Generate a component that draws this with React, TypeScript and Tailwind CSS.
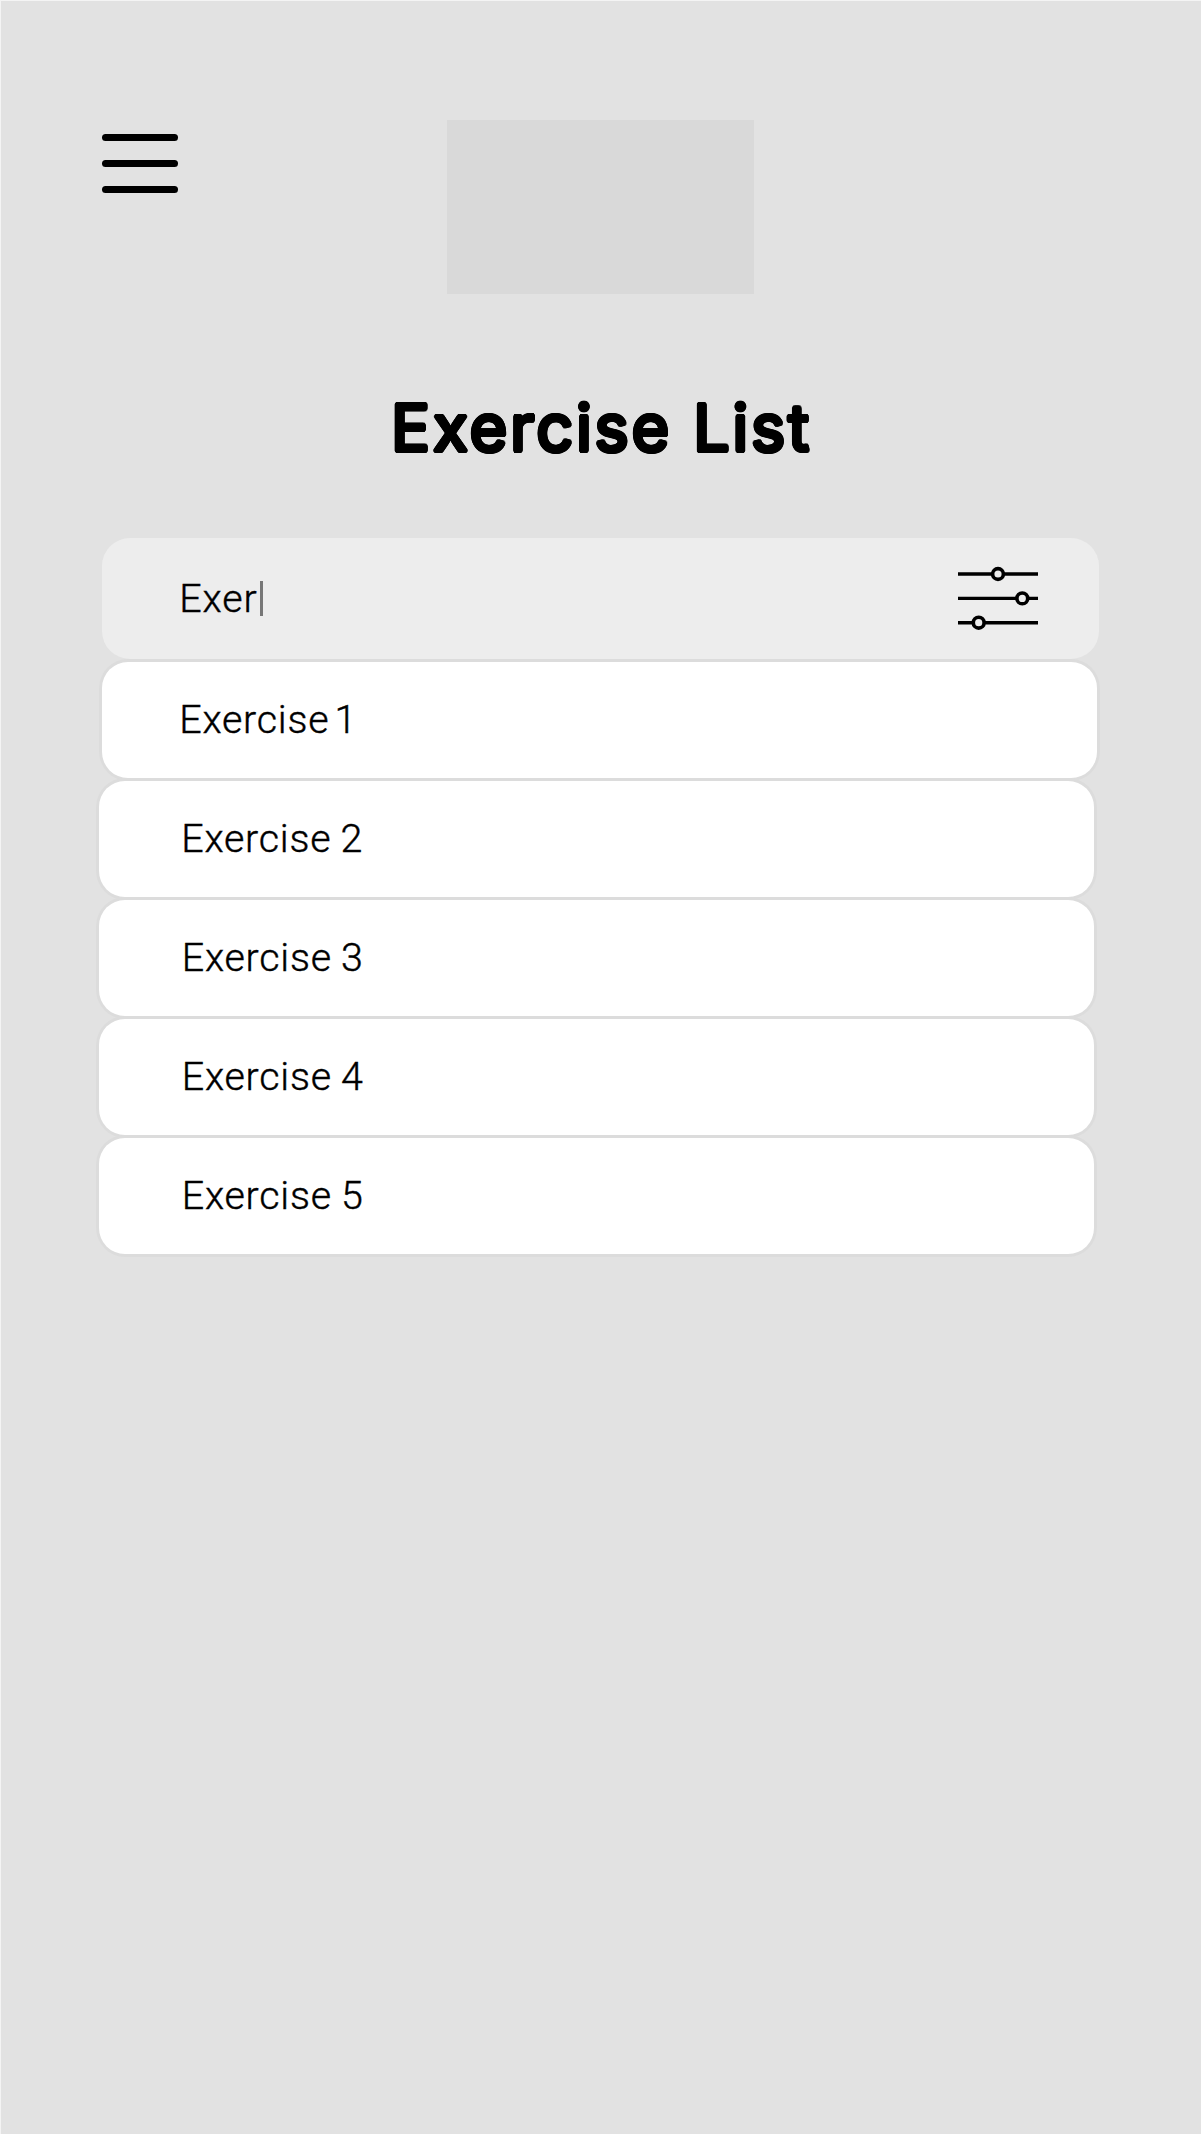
import React from "react";

const exercises = [
  { label: "Exercise 1", card: "ml-[3px] pl-[77px] [word-spacing:-5px]" },
  { label: "Exercise 2", card: "pl-[82px] [word-spacing:-1px]" },
  { label: "Exercise 3", card: "pl-[82.5px] [word-spacing:-1px]" },
  { label: "Exercise 4", card: "pl-[82.5px] [word-spacing:-1px]" },
  { label: "Exercise 5", card: "pl-[82.5px] [word-spacing:-1px]" },
];

function MenuButton() {
  return (
    <button aria-label="Menu" className="mt-[14px] flex h-[59px] w-[76px] flex-col justify-between">
      <span className="h-[7px] w-full rounded-full bg-black" />
      <span className="h-[7px] w-full rounded-full bg-black" />
      <span className="h-[7px] w-full rounded-full bg-black" />
    </button>
  );
}

function FilterIcon() {
  return (
    <svg className="h-[66px] w-[80px]" viewBox="0 0 80 66" fill="none" stroke="#000" strokeWidth="3.4">
      <path d="M0 9H80M0 33.4H80M0 57.7H80" />
      <g fill="#ededed" strokeWidth="3.6">
        <circle cx="40" cy="9" r="5.4" />
        <circle cx="64.3" cy="33.4" r="5.4" />
        <circle cx="20.7" cy="57.7" r="5.4" />
      </g>
    </svg>
  );
}

export default function App() {
  return (
    <main className="h-[2134px] w-[1201px] overflow-hidden border-t border-l border-[#f4f4f4] bg-[#e2e2e2] pt-[119px] font-['Roboto',sans-serif] text-black">
      <header className="flex pl-[101px]">
        <MenuButton />
        <div className="ml-[269px] h-[174px] w-[307px] bg-[#d9d9d9]" />
      </header>
      <h1 className="mt-[84px] ml-[390px] h-[100px] text-[65px] leading-[100px] font-normal tracking-[2.7px] whitespace-nowrap font-['Inter',sans-serif] [text-shadow:1.9px_0_#000,1.7px_1px_#000,1px_1.7px_#000,0_1.9px_#000,-1px_1.7px_#000,-1.7px_1px_#000,-1.9px_0_#000,-1.7px_-1px_#000,-1px_-1.7px_#000,0_-1.9px_#000,1px_-1.7px_#000,1.7px_-1px_#000]">
        Exercise List
      </h1>
      <div className="mt-[59.5px] ml-[101.3px] flex h-[121.5px] w-[997px] items-center rounded-[28px] bg-[#ededed] pr-[61.3px] pl-[77px]">
        <span className="pt-[1px] text-[39.4px] leading-[50px] font-light tracking-[0.9px] [-webkit-text-stroke:0.4px_#000]">Exer</span>
        <span className="ml-[2.5px] h-[34.5px] w-[3px] bg-[#777]" />
        <span className="ml-auto">
          <FilterIcon />
        </span>
      </div>
      <ul className="mt-[3px] ml-[98.3px] flex flex-col gap-[2.9px]">
        {exercises.map(({ label, card }) => (
          <li
            key={label}
            className={`flex h-[116px] w-[994.3px] items-center rounded-[26px] bg-white text-[39.4px] leading-[50px] font-light tracking-[0.75px] shadow-[0_0_0_2.9px_#dcdcdc] [-webkit-text-stroke:0.4px_#000] ${card}`}
          >
            {label}
          </li>
        ))}
      </ul>
    </main>
  );
}
